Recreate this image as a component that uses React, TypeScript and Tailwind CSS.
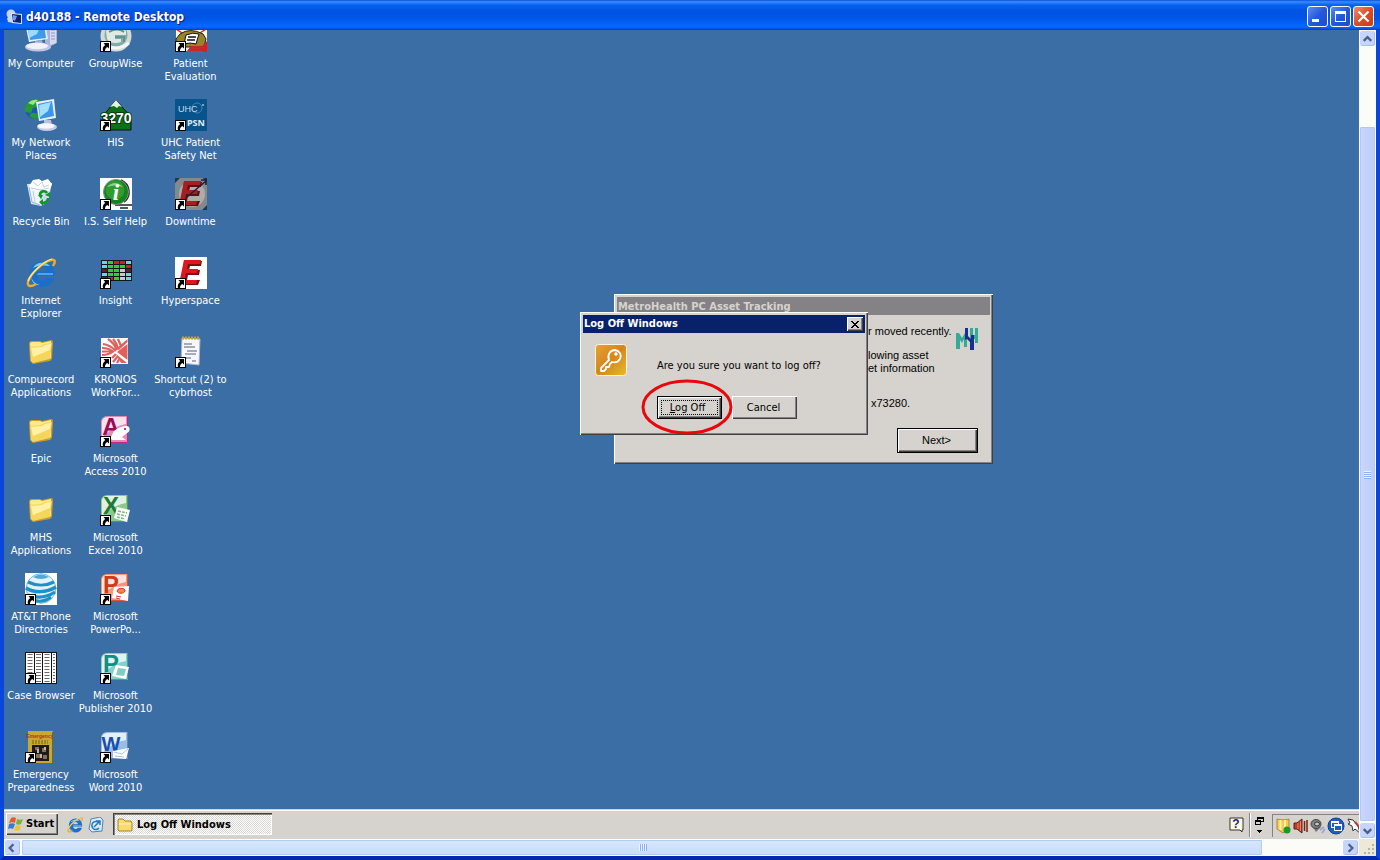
import React from "react";

const tahoma = "font-['DejaVu_Sans_Condensed','Noto_Sans',sans-serif]";
const raised =
  "bg-[#d6d3ce] shadow-[inset_1px_1px_#ffffff,inset_-1px_-1px_#404040,inset_-2px_-2px_#848284]";

function Svg({ children, label }: { children: React.ReactNode; label?: string }) {
  return (
    <svg viewBox="0 0 32 32" className="block size-8 shrink-0" aria-hidden={!label} aria-label={label}>
      {children}
    </svg>
  );
}

function Shortcut() {
  return (
    <g>
      <rect x="0" y="21" width="11" height="11" fill="#000" />
      <rect x="1" y="22" width="9" height="9" fill="#fff" />
      <path d="M3.500 23H9v5.500L7.300 27C5.600 28 5 29 5 31H3c-.8-2.500 0-4.500 2.200-6z" fill="#000" />
    </g>
  );
}

function MyComputerIcon() {
  return (
    <Svg>
      <path d="M20 6l8-4 4 2v19l-6 3-6-3z" fill="#aab3d8" />
      <path d="M25 5l6 1v17l-6 2z" fill="#d5daf0" />
      <path d="M26 10h4M26 13h4M26 16h4M26 19h4" stroke="#8f9ac6" />
      <path d="M0 3l20-2 3 18-19 3z" fill="#e6effc" />
      <path d="M2 5l17-2 2 15-16 2z" fill="#3f9ae8" />
      <path d="M3 6l13-2-4 10-8 4z" fill="#9bdcfd" />
      <path d="M10 21l7-1 1 4-8 1z" fill="#a3acd0" />
      <ellipse cx="13" cy="27" rx="13" ry="4.500" fill="#c0c4de" />
      <ellipse cx="12" cy="26" rx="11" ry="3.200" fill="#eff1fb" />
    </Svg>
  );
}

function NetworkIcon() {
  return (
    <Svg>
      <circle cx="10" cy="10" r="10" fill="#1d55b8" />
      <path d="M2 4c4-5 11-5 15-2l-5 6-4 1-2 5-6-1c-1-4 0-6 2-9zM6 14l6 0 2 5-5 1-5-3z" fill="#259a37" />
      <path d="M3 4c3-3 7-4 10-3l-5 5z" fill="#9fe08c" />
      <path d="M11 3l18-3 2 19-17 3z" fill="#e8effc" />
      <path d="M13 5l14-3 2 15-14 3z" fill="#3997ea" />
      <path d="M14 6l12-3-3 9-8 6z" fill="#a2dffe" />
      <path d="M19 21h7l1 6-8 1z" fill="#b8bfdd" />
      <ellipse cx="22" cy="28" rx="10" ry="4" fill="#c6cae3" />
      <ellipse cx="21" cy="27" rx="8.500" ry="2.700" fill="#f4f5fd" />
    </Svg>
  );
}

function RecycleIcon() {
  return (
    <Svg>
      <path d="M2 6l25-1-4 19-7 4-10-2z" fill="#cfe0f2" />
      <path d="M3 8l13 3v16l-9-2z" fill="#eef5fc" />
      <path d="M4 8l4-6 6-1 3 2 6-2 4 5-3 7-7-1-6 2z" fill="#fff" />
      <path d="M8 4l5 4 4-4 2 5 5-2M6 10l9 2 9-2" stroke="#c0d0e6" fill="none" />
      <path d="M16 12v14M21 12l-2 13M8 13l2 12" stroke="#bdd4ea" />
      <path d="M4 9l3 15 8 3" stroke="#93b7dc" fill="none" />
      <g fill="none" stroke="#149424" strokeWidth="2.600">
        <path d="M15 17c0-4 5-5 7-2M23 20c0 4-3 5-6 5" />
      </g>
      <path d="M20 17l5-3v5zM18 21v7l-4-4zM13 17h5l-2 4z" fill="#149424" />
    </Svg>
  );
}

function IEShape() {
  return (
    <>
      <path
        d="M17 4C9.500 4 4.500 10 4.500 17S9.500 30 17 30c6 0 10.500-3.500 12-9h-8c-.8 1.700-2 2.500-4 2.500-2.600 0-4.200-1.600-4.500-4.500h17C30 10 25 4 17 4zm0 6.500c2.500 0 4.200 1.400 4.500 4h-9c.4-2.600 2-4 4.500-4z"
        fill="#1a6fc9"
      />
      <path d="M8 11c3-6 12-7 17-2-5-1-12-1-17 2zM6 18c0 5 4 9 9 10-5 1-9-3-9-10z" fill="#7ecbf8" />
      <path d="M13 16h15v2H12z" fill="#4ea6e8" />
      <path d="M28 9c3-5 2-7-2-6C18 5 5 17 3 25c-1 5 3 5 8 2" fill="none" stroke="#eaae30" strokeWidth="2.400" />
      <path d="M27 2C19 4 6 16 3 24" fill="none" stroke="#ffeb90" strokeWidth="1.200" />
    </>
  );
}

function FolderIcon() {
  return (
    <Svg>
      <path d="M4 8q0-3 3-3h8l2 1 9-2q2 0 2 2l-1 17-2 2-17 3-3-3z" fill="#c99a2c" />
      <path d="M5 8q0-2 2-2h8l2 1 9-2v17L8 25z" fill="#ffeb8c" />
      <path d="M5 11l11-1 3-2 8-1-2 16-17 4-2-2z" fill="#f5d65c" />
      <path d="M6 12l11-1 3-2 6-1-1 6-17 7z" fill="#fff2a8" />
    </Svg>
  );
}

function GlobeIcon() {
  return (
    <Svg>
      <rect width="32" height="32" fill="#fff" />
      <circle cx="16" cy="15.500" r="14.800" fill="#e3f1f9" stroke="#7db6d6" />
      <path d="M8 4q8-5 16 0-8 4-16 0z" fill="#4fa9d6" />
      <g fill="none" stroke="#1f8fc8">
        <path d="M3 9c8 4 18 4 26 0" strokeWidth="3.200" />
        <path d="M1 15c8 5 20 5 30-1" strokeWidth="3.500" />
        <path d="M3 22c8 3 18 3 27-3" strokeWidth="3.200" />
        <path d="M8 27c6 2 13 1 18-3" strokeWidth="3" />
      </g>
      <Shortcut />
    </Svg>
  );
}

function CaseIcon() {
  return (
    <Svg>
      <rect width="32" height="32" fill="#111" />
      <path d="M1 1h8v30H1zM10 1h7v30h-7zM18 1h8v30h-8zM27 1h4v30h-4z" fill="#fff" />
      <g stroke="#6b6b6b">
        <path d="M5 2v28M13.500 2v28M22 2v28" strokeWidth="5" strokeDasharray="1 2" />
        <path d="M29 2v28" strokeWidth="2" strokeDasharray="1 2" />
      </g>
      <Shortcut />
    </Svg>
  );
}

function EmergencyIcon() {
  return (
    <Svg>
      <rect x="3" y="0" width="25" height="32" fill="#c9a830" />
      <path d="M27.500 1v31" stroke="#786720" />
      <text x="15" y="7" textAnchor="middle" fontSize="5" fontWeight="700" fill="#a83815" className="font-['Liberation_Sans',sans-serif]">
        Emergency
      </text>
      <path d="M7 10h16M7 12h16" stroke="#6a611f" strokeDasharray="2 1" />
      <rect x="7" y="14" width="17" height="16" fill="#1c1a1a" />
      <path d="M10 16h4v3h-4zM17 17h4v4h-4zM11 23h4v4h-4zM18 24h4v4h-4z" fill="#81715c" />
      <path d="M12 18h2v4h-2zM19 16h2v3h-2zM15 23h2v4h-2z" fill="#c6b79c" />
      <Shortcut />
    </Svg>
  );
}

function GroupWiseIcon() {
  return (
    <Svg>
      <circle cx="16" cy="16" r="15.500" fill="#d3dbd9" />
      <circle cx="16" cy="15" r="11.500" fill="#86aaa5" />
      <path d="M6 11c6-5 14-4 20 0v4H15v4h6v3c-6 2-12 1-14-3z" fill="#dfeae4" />
      <path d="M9 12c5-3 11-3 15 0M15 17h9v5" stroke="#5f968d" strokeWidth="2" fill="none" />
      <path d="M3 23q12 10 26 0" stroke="#f4f6f5" strokeWidth="3" fill="none" />
      <Shortcut />
    </Svg>
  );
}

function HisIcon() {
  return (
    <Svg>
      <path d="M16 1l15 17v13H3V17z" fill="#0b7018" stroke="#111" />
      <path d="M16 1l6 7-3-1-2 2-3-2-4 1z" fill="#e2f4df" />
      <text x="16" y="24" textAnchor="middle" fontSize="14" fontWeight="700" fill="#fff" stroke="#083c0d" strokeWidth="2" paintOrder="stroke" className="font-['Liberation_Sans_Narrow','Liberation_Sans',sans-serif]">
        3270
      </text>
      <Shortcut />
    </Svg>
  );
}

function InfoIcon() {
  return (
    <Svg>
      <rect width="32" height="32" fill="#fff" />
      <path d="M21 2c9 4 11 16 3 22M15 27h17M20 30h8" fill="none" stroke="#222" strokeWidth="1.600" />
      <circle cx="16" cy="14" r="12.500" fill="#148320" stroke="#8a8a8a" />
      <circle cx="15" cy="12" r="9.500" fill="#2f9c2f" />
      <path d="M7 9q8-8 16 0-8-3-16 0z" fill="#8fd08b" />
      <text x="16" y="22" textAnchor="middle" fontSize="23" fontWeight="700" fontStyle="italic" fill="#fff" className="font-['Liberation_Serif',serif]">
        i
      </text>
      <Shortcut />
    </Svg>
  );
}

function InsightIcon() {
  const rows = ["cgrrc", "cgggr", "dggwd", "cggwc", "drgwc"];
  const colors: Record<string, string> = { c: "#66d8df", g: "#25d52e", r: "#cf1e25", d: "#711720", w: "#c8c8cf" };
  return (
    <Svg>
      <rect x="1" y="3" width="31" height="21" fill="#10151b" />
      {rows.flatMap((row, y) =>
        row.split("").map((c, x) => <rect key={`${x}-${y}`} x={2 + x * 6} y={4 + y * 4} width="5" height="3" fill={colors[c]} />),
      )}
      <Shortcut />
    </Svg>
  );
}

function KronosIcon() {
  return (
    <Svg>
      <rect x="1" y="2" width="27" height="26" fill="#fff" />
      <g fill="none" stroke="#e0605c" strokeWidth="2.200">
        <path d="M2 12q7 0 12 4M2 15.500h11M2 19q7 0 12-4M3 8q7 1 13 7M8 3q6 4 9 11M13 3q4 5 5 9M18 3l3 7" />
        <path d="M12 22l4-4M13 26l5-6M17 27l3-5" />
      </g>
      <path d="M27.500 3v3L19 14l-3-1zM17 16l10.500-8v16z" fill="#e0605c" />
      <path d="M16 18l11 9h-6z" fill="#e0605c" />
      <Shortcut />
    </Svg>
  );
}

type OfficeKind = "access" | "excel" | "powerpoint" | "publisher" | "word";
const officeData: Record<OfficeKind, [string, string, string, string]> = {
  access: ["A", "#9d0a57", "#dd8db8", "#c0287a"],
  excel: ["X", "#217a33", "#8cc98c", "#4b9c55"],
  powerpoint: ["P", "#d03a18", "#f0987c", "#d9543b"],
  publisher: ["P", "#0f9085", "#86d0c8", "#36a99f"],
  word: ["W", "#1450b0", "#9cbce6", "#5688cc"],
};

function OfficeIcon({ kind }: { kind: OfficeKind }) {
  const [letter, dark, light, edge] = officeData[kind];
  return (
    <Svg>
      <path d="M1 6Q2 1 8 1h20v27H1z" fill={light} />
      <path d="M27.500 1v26.500H1" fill="none" stroke={edge} />
      <path d="M2 6q1-4 6-4h18v7Q14 11 2 22z" fill="#fff" opacity=".75" />
      <text
        x="11"
        y={kind === "word" ? 20 : 20}
        textAnchor="middle"
        fontSize={kind === "word" ? 20 : 24}
        fontWeight="700"
        fill={dark}
        className="font-['Liberation_Sans_Narrow','Liberation_Sans',sans-serif]"
      >
        {letter}
      </text>
      {kind === "access" && <path d="M10 24l4-8q6-5 13-5c4 1 3 6 0 7l-5 4 4 3H13z" fill="#fff" />}
      {kind === "access" && <circle cx="25" cy="14" r="1" fill={dark} />}
      {kind === "excel" && <path d="M17 13l13 3-3 12-13-4z" fill="#fff" />}
      {kind === "excel" && <path d="M18 17l9 2M17 20l9 2M17 23l8 2" stroke="#75b77c" strokeWidth="1.500" strokeDasharray="3 1" />}
      {kind === "powerpoint" && <path d="M14 14l15-1-1 15-16-3z" fill="#fff" />}
      {kind === "powerpoint" && <path d="M17 18c1-4 9-3 8 0-1 3-7 3-8 0M16 23l5 1M16 25l4 1" stroke={dark} fill="#f08060" />}
      {kind === "publisher" && <path d="M16 13l13 2-3 12-14-3z" fill="#fff" />}
      {kind === "publisher" && <path d="M18 16l8 1-2 7-8-1z" fill="#8ac9c3" />}
      {kind === "word" && <path d="M13 20l16-3-3 11-13-1z" fill="#fff" />}
      {kind === "word" && <path d="M14 21l8 2 6-5M15 25l9 1" stroke="#a9c0dd" fill="none" />}
      <Shortcut />
    </Svg>
  );
}

function PatientIcon() {
  return (
    <Svg>
      <rect x="1" y="0" width="31" height="31" fill="#faf7ef" />
      <path d="M1 9l6 4M31 9l-6 4" stroke="#d8282a" strokeWidth="1.500" />
      <path d="M5 14q10-7 23 0l3 5-2 8H1v-8z" fill="#97832c" stroke="#211f11" />
      <path d="M11 15q7-3 13-1l-3 10q-6-2-12 0z" fill="#fff" stroke="#111" />
      <path d="M13 17h8M12 20h8" stroke="#111" strokeWidth="1.500" />
      <path d="M12 31l4-5h9l7 5z" fill="#c22a2c" />
      <path d="M27 26l5-5v11h-4z" fill="#e71825" />
      <Shortcut />
    </Svg>
  );
}

function UhcIcon() {
  return (
    <Svg>
      <rect width="32" height="32" fill="#07548d" />
      <circle cx="22" cy="9" r="5" fill="none" stroke="#4382ad" />
      <text x="3" y="13" fontSize="9" fill="#c7dae6" className="font-['Liberation_Sans',sans-serif]">UHC</text>
      <circle cx="28" cy="6" r="1" fill="#9dc0d6" />
      <text x="12" y="27" fontSize="9" fontWeight="700" fill="#e1edf4" className="font-['Noto_Sans',sans-serif]">PSN</text>
      <Shortcut />
    </Svg>
  );
}

function EpicIcon({ down }: { down?: boolean }) {
  return (
    <Svg>
      <rect width="32" height="32" fill={down ? "#85898b" : "#fff"} />
      {down && <path d="M0 0h5L0 5zM28 0h4v5zM0 28v4h4zM32 27v5h-5z" fill="#123e50" />}
      {down && <circle cx="17" cy="16" r="13" fill="#b0aba8" />}
      <path d="M9 4h18l-1 5H15l-1 4h11l-1 5H13l-1 5h13l-2 5H5z" fill={down ? "#5b1114" : "#7c0e14"} />
      <path d="M9 3h17l-1 4H13l-1 5h11l-1 4H11l-1 7h12l-1 4H4z" fill={down ? "#a61e22" : "#dc1720"} />
      {down && <path d="M12 19L31 3M26 2h5v5" stroke="#14243b" strokeWidth="1.600" fill="none" />}
      <Shortcut />
    </Svg>
  );
}

function NoteIcon() {
  return (
    <Svg>
      <path d="M7 2l18 1-1 26-18-2z" fill="#f7f8ff" stroke="#adb5c7" />
      <path d="M7 2h18" stroke="#c6a32c" strokeWidth="3" strokeDasharray="2 1" />
      <path d="M9 8h8M9 11h11M12 15h10M10 18h11M10 22h6M17 25h4" stroke="#536176" />
      <Shortcut />
    </Svg>
  );
}

type Item = { lines: string[]; icon: React.ReactNode };
const columns: Item[][] = [
  [
    { lines: ["My Computer"], icon: <MyComputerIcon /> },
    { lines: ["My Network", "Places"], icon: <NetworkIcon /> },
    { lines: ["Recycle Bin"], icon: <RecycleIcon /> },
    { lines: ["Internet", "Explorer"], icon: <Svg><IEShape /></Svg> },
    { lines: ["Compurecord", "Applications"], icon: <FolderIcon /> },
    { lines: ["Epic"], icon: <FolderIcon /> },
    { lines: ["MHS", "Applications"], icon: <FolderIcon /> },
    { lines: ["AT&T Phone", "Directories"], icon: <GlobeIcon /> },
    { lines: ["Case Browser"], icon: <CaseIcon /> },
    { lines: ["Emergency", "Preparedness"], icon: <EmergencyIcon /> },
  ],
  [
    { lines: ["GroupWise"], icon: <GroupWiseIcon /> },
    { lines: ["HIS"], icon: <HisIcon /> },
    { lines: ["I.S. Self Help"], icon: <InfoIcon /> },
    { lines: ["Insight"], icon: <InsightIcon /> },
    { lines: ["KRONOS", "WorkFor..."], icon: <KronosIcon /> },
    { lines: ["Microsoft", "Access 2010"], icon: <OfficeIcon kind="access" /> },
    { lines: ["Microsoft", "Excel 2010"], icon: <OfficeIcon kind="excel" /> },
    { lines: ["Microsoft", "PowerPo..."], icon: <OfficeIcon kind="powerpoint" /> },
    { lines: ["Microsoft", "Publisher 2010"], icon: <OfficeIcon kind="publisher" /> },
    { lines: ["Microsoft", "Word 2010"], icon: <OfficeIcon kind="word" /> },
  ],
  [
    { lines: ["Patient", "Evaluation"], icon: <PatientIcon /> },
    { lines: ["UHC Patient", "Safety Net"], icon: <UhcIcon /> },
    { lines: ["Downtime"], icon: <EpicIcon down /> },
    { lines: ["Hyperspace"], icon: <EpicIcon /> },
    { lines: ["Shortcut (2) to", "cybrhost"], icon: <NoteIcon /> },
  ],
];

function DesktopIcon({ lines, icon }: Item) {
  return (
    <button type="button" className="flex h-[79px] flex-col items-center gap-[5px] text-[11px] leading-[13px] text-white">
      {icon}
      <span className="flex flex-col items-center whitespace-nowrap">
        {lines.map((line) => (
          <span key={line}>{line}</span>
        ))}
      </span>
    </button>
  );
}

function TitleBar() {
  const control =
    "flex size-[21px] items-center justify-center rounded-[3px] border border-white bg-linear-to-br from-[#5c8cf5] via-[#2458dc] to-[#1d4bd0]";
  return (
    <header className="flex h-[30px] shrink-0 items-center bg-[linear-gradient(to_bottom,#0c50d8_0%,#3a8cff_6%,#0863f0_16%,#0054e3_35%,#0055e8_60%,#0668ff_88%,#0557e8_95%,#0138b4_100%)] pt-[3px] pr-1.5 pl-1.5">
      <svg viewBox="0 0 16 16" className="size-4" aria-hidden="true">
        <circle cx="5" cy="5" r="4.500" fill="#c9d4ec" />
        <path d="M1 9l5-2 2 7-6-1z" fill="#cdd6e8" />
        <path d="M5 4l11 1v10l-10-1z" fill="#dde7fb" />
        <path d="M6 5l9 1v8l-8-1z" fill="#101f70" />
        <path d="M7 6l4 1-2 5-2-1z" fill="#6d9cf0" />
      </svg>
      <h1 className="ml-1 flex-1 font-['DejaVu_Sans_Condensed','Noto_Sans',sans-serif] text-[12px] leading-4 font-bold text-white text-shadow-[1px_1px_1px_#0a1883]">
        d40188 - Remote Desktop
      </h1>
      <div className="flex gap-0.5">
        <button type="button" aria-label="Minimize" className={control}>
          <svg viewBox="0 0 19 19" className="size-[19px]"><path d="M4 12h7v3H4z" fill="#fff" /></svg>
        </button>
        <button type="button" aria-label="Maximize" className={control}>
          <svg viewBox="0 0 19 19" className="size-[19px]"><path d="M4 4h11v11H4zM5 7v7h9V7z" fill="#fff" fillRule="evenodd" /></svg>
        </button>
        <button type="button" aria-label="Close" className="flex size-[21px] items-center justify-center rounded-[3px] border border-white bg-linear-to-br from-[#ee8a6c] via-[#dd4c25] to-[#c93c17]">
          <svg viewBox="0 0 19 19" className="size-[19px]"><path d="M4.500 4.500l10 10M14.500 4.500l-10 10" stroke="#fff" strokeWidth="2.200" /></svg>
        </button>
      </div>
    </header>
  );
}

function ScrollButton({ dir }: { dir: "up" | "down" | "left" | "right" }) {
  const paths = { up: "M4 10l4-4 4 4", down: "M4 6l4 4 4-4", left: "M9 4L5 8l4 4", right: "M6 4l4 4-4 4" };
  return (
    <button type="button" aria-label={`Scroll ${dir}`} className="flex size-[17px] shrink-0 items-center justify-center rounded-[3px] border border-white bg-[#c5d5fc] shadow-[inset_-1px_-1px_#a9bff0]">
      <svg viewBox="0 0 16 16" className="size-4"><path d={paths[dir]} fill="none" stroke="#4d6185" strokeWidth="2.500" /></svg>
    </button>
  );
}

function AssetDialog() {
  return (
    <section aria-label="MetroHealth PC Asset Tracking" className={`absolute top-[264px] left-[610px] flex h-[170px] w-[379px] flex-col p-[3px] ${raised}`}>
      <h2 className="h-[18px] bg-[#848284] px-px text-[11px] leading-[19px] font-bold whitespace-nowrap text-[#d6d3ce]">MetroHealth PC Asset Tracking</h2>
      <div className="flex flex-1 flex-col pt-[10px] pr-3 pl-[251px] font-['Liberation_Sans',sans-serif] text-[11px] leading-[13px] text-black">
        <div className="flex items-start justify-between">
          <div className="whitespace-nowrap">
            <p>r moved recently.</p>
            <p className="mt-[11px]">lowing asset</p>
            <p>et information</p>
            <p className="mt-[22px] pl-[3px]">x73280.</p>
          </div>
          <svg viewBox="0 0 22 22" className="mt-[3px] h-[22px] w-[22px] shrink-0" aria-label="MetroHealth">
            <path d="M0 21V5h3l3 5 3-5h2v14H8v-8l-2 4-2-3v9z" fill="#35aa94" />
            <path d="M14 0h3v7h2V0h3v15h-3v-4h-5z" fill="#35aa94" />
            <path d="M9 0h3v8l3 3V7h3v15h-4v-8l-3-3-2 1z" fill="#1b2f92" />
          </svg>
        </div>
        <button type="button" className="mt-[18px] h-[25px] w-[81px] self-end border border-black bg-[#d6d3ce] pr-0.5 text-[11px] shadow-[inset_1px_1px_#fff,inset_-1px_-1px_#404040,inset_-2px_-2px_#848284]">
          Next&gt;
        </button>
      </div>
    </section>
  );
}

function LogOffDialog() {
  return (
    <section role="dialog" aria-label="Log Off Windows" className={`absolute top-[282px] left-[576px] flex h-[123px] w-[288px] flex-col p-[3px] ${raised}`}>
      <div className="flex h-[18px] items-center justify-between bg-[#08216b] pr-0.5 pl-px">
        <h2 className="text-[11px] leading-[18px] font-bold text-white">Log Off Windows</h2>
        <button type="button" aria-label="Close" className={`flex h-[14px] w-4 items-center justify-center ${raised}`}>
          <svg viewBox="0 0 8 7" className="h-[7px] w-2" shapeRendering="crispEdges"><path d="M0 0h2v1h1v1h2V1h1V0h2v1H7v1H6v1H5v1h1v1h1v1h1v1H6V6H5V5H3v1H2v1H0V6h1V5h1V4h1V3H2V2H1V1H0z" fill="#000" /></svg>
        </button>
      </div>
      <div className="flex gap-[29px] pt-[11px] pl-3 text-[11px] leading-[13px] text-black">
        <svg viewBox="0 0 32 32" className="size-8 shrink-0" aria-hidden="true">
          <defs>
            <linearGradient id="keyFill" x2="1" y2="1"><stop stopColor="#e8a038" /><stop offset=".5" stopColor="#d4861c" /><stop offset="1" stopColor="#e9bb32" /></linearGradient>
          </defs>
          <rect x=".5" y=".5" width="31" height="31" rx="3" fill="url(#keyFill)" stroke="#fff4dc" />
          <path d="M14 16c-2-5 1-10 6-10 5 1 7 5 5 9-2 3-5 4-8 3l-2 2-1 3h-3v2l-2 2H6v-3z" fill="none" stroke="#fff" strokeWidth="1.800" strokeLinejoin="round" />
          <circle cx="21" cy="10" r="1.800" fill="#fff" />
        </svg>
        <div className="pt-[15px] pl-px">
          <p className="whitespace-nowrap">Are you sure you want to log off?</p>
          <div className="mt-6 flex gap-[10px]">
            <div className="relative">
              <button type="button" className="h-[23px] w-[65px] border border-black bg-[#d6d3ce] p-[3px] shadow-[inset_1px_1px_#fff,inset_-1px_-1px_#404040,inset_-2px_-2px_#848284]">
                <span className="flex h-full items-center justify-center border border-dotted border-black pr-1">
                  <span><u>L</u>og Off</span>
                </span>
              </button>
              <svg viewBox="0 0 92 56" className="pointer-events-none absolute top-[-17px] left-[-16px] h-14 w-[92px] max-w-none" aria-hidden="true">
                <ellipse cx="46" cy="28" rx="44" ry="26" fill="none" stroke="#e8080c" strokeWidth="3" />
              </svg>
            </div>
            <button type="button" className={`h-[23px] w-[65px] pr-0.5 ${raised}`}>Cancel</button>
          </div>
        </div>
      </div>
    </section>
  );
}

function Taskbar() {
  return (
    <footer className="flex h-[30px] shrink-0 items-start border-t border-[#d6d3ce] bg-[#d6d3ce] pt-[3px] pl-0.5 text-[11px] text-black shadow-[inset_0_1px_#fff]">
      <button type="button" className={`flex h-[22px] w-[52px] items-center gap-0.5 pl-0.5 font-bold ${raised}`}>
        <svg viewBox="0 0 16 16" className="size-4 shrink-0" aria-hidden="true">
          <path d="M3 2c2-1 3-1 5 0L7 7C5 6 4 6 1 7z" fill="#e35d2b" />
          <path d="M9 3c2 1 4 1 6 0l-2 5c-2 1-3 1-5 0z" fill="#71b63d" />
          <path d="M1 8c2-1 4-1 6 0l-2 5c-2-1-3-1-5 0z" fill="#367bd2" />
          <path d="M8 9c2 1 3 1 5 0l-1 5c-2 1-4 1-6 0z" fill="#efc432" />
        </svg>
        Start
      </button>
      <button type="button" aria-label="Internet Explorer" className="mt-1 ml-[9px]">
        <svg viewBox="1 1 30 30" className="size-4"><IEShape /></svg>
      </button>
      <button type="button" aria-label="Outlook Express" className="mt-1 ml-[5px]">
        <svg viewBox="0 0 16 16" className="size-4">
          <path d="M3 2l9-2 3 3-1 11-10 1-3-3z" fill="#d9ebfa" stroke="#4b83b7" />
          <path d="M11 6a4 4 0 1 0 0 5M6 10l6-6M8 4h4v4" fill="none" stroke="#2377be" strokeWidth="1.500" />
        </svg>
      </button>
      <button type="button" className="ml-[9px] flex h-[22px] w-[159px] items-center gap-1 bg-[#eae8e5] bg-[repeating-conic-gradient(#ffffff_0_25%,#d9d7d3_0_50%)] bg-[size:2px_2px] pt-0.5 pl-1 font-bold shadow-[inset_1px_1px_#404040,inset_2px_2px_#848284,inset_-1px_-1px_#fff]">
        <svg viewBox="0 0 16 16" className="size-4" aria-hidden="true">
          <path d="M1 3l1-1h4l2 2h6l1 2v7l-1 1H2l-1-1z" fill="#f7da70" stroke="#a88424" />
          <path d="M2 7h12" stroke="#fff6b4" />
        </svg>
        Log Off Windows
      </button>
      <div className="ml-auto flex h-6 items-center">
        <svg viewBox="0 0 15 16" className="h-4 w-[15px]" aria-label="Help">
          <path d="M1 1h13v12h-1v2l-2-2H1z" fill="#fffce1" stroke="#333" />
          <text x="7" y="11" textAnchor="middle" fontSize="12" fontWeight="700" fill="#1b2679" className="font-['Liberation_Sans',sans-serif]">?</text>
        </svg>
        <span className="ml-[5px] h-6 w-0.5 border-r border-l border-r-white border-l-[#848284]" />
        <svg viewBox="0 0 9 17" className="ml-1 h-[17px] w-[9px]" aria-hidden="true" shapeRendering="crispEdges">
          <path d="M2 0h7v5H6v3H0V3h2zM3 2v1h3v1h2V2zM1 5v2h4V5zM2 13h5v1H6v1H5v1H4v-1H3v-1H2z" fill="#000" fillRule="evenodd" />
        </svg>
        <div className="ml-2 flex h-[23px] w-[87px] items-center gap-px overflow-hidden border-t border-l border-[#848284] pl-[3px]">
          <svg viewBox="0 0 16 16" className="size-4 shrink-0"><path d="M1 1c3 1 10 1 12 0v10l-6 4-6-4z" fill="#f1cb54" stroke="#ad8a30" /><path d="M4.500 2v10M9 2v11" stroke="#fff2a3" strokeWidth="2" /><circle cx="11" cy="12" r="3.500" fill="#1b9a29" /></svg>
          <svg viewBox="0 0 16 16" className="size-4 shrink-0"><path d="M1 5h3l5-4v14l-5-4H1z" fill="#bb4027" stroke="#582016" /><path d="M5 5v6M7.500 3v10" stroke="#ee8462" /><path d="M11.500 3v10M14 2v12" stroke="#732414" strokeWidth="1.500" /></svg>
          <svg viewBox="0 0 16 16" className="size-4 shrink-0"><path d="M2 8l4 6 5-5z" fill="#777" /><ellipse cx="6" cy="6" rx="5" ry="4.500" fill="#828282" stroke="#444" /><ellipse cx="7" cy="6" rx="2.500" ry="2" fill="#c7c7c7" stroke="#333" /><path d="M10 12l4-3M12 15l3-4" stroke="#a0a7d0" strokeWidth="2" /></svg>
          <svg viewBox="0 0 18 18" className="size-[18px] shrink-0"><circle cx="9" cy="9" r="8" fill="#1d5fc0" stroke="#123f86" /><path d="M4 4h8v7H4z" fill="#fff" /><path d="M5 6h6v4H5z" fill="#1d5fc0" /><path d="M7 7h8v7H7z" fill="#fff" /><path d="M8 9h6v4H8z" fill="#1d5fc0" /></svg>
          <svg viewBox="0 0 16 16" className="size-4 shrink-0"><path d="M2 1l5 1 5 6 2 7-5-4-2 2-1-5-4-2 2-1z" fill="#fff" stroke="#333" /><path d="M9 4l5 6" stroke="#b6362c" strokeWidth="2" /></svg>
        </div>
      </div>
    </footer>
  );
}

export default function App() {
  return (
    <main className={`flex h-screen w-full flex-col overflow-hidden bg-[#0842d0] ${tahoma}`}>
      <TitleBar />
      <div className="flex min-h-0 flex-1 flex-col border-x-4 border-b-4 border-x-[#0846dc] border-b-[#0529ad]">
        <div className="flex min-h-0 flex-1">
          <div className="flex min-w-0 flex-1 flex-col">
            <div className="relative min-h-0 flex-1 overflow-hidden bg-[#3a6ea5]">
              <div className="-mt-[10px] grid grid-cols-[74px_75px_75px] items-start">
                {columns.map((items, index) => (
                  <div key={index} className="flex flex-col">
                    {items.map((item) => (
                      <DesktopIcon key={item.lines.join(" ")} {...item} />
                    ))}
                  </div>
                ))}
              </div>
              <AssetDialog />
              <LogOffDialog />
            </div>
            <Taskbar />
          </div>
          <div className="flex w-[17px] shrink-0 flex-col bg-[#fbfbf8]">
            <ScrollButton dir="up" />
            <div className="flex min-h-0 flex-1 flex-col pt-[79px]">
              <div className="flex flex-1 flex-col items-center justify-center gap-px rounded-[2px] border border-white bg-linear-to-r from-[#c9d7fc] to-[#bdccfa] shadow-[inset_0_0_0_1px_#b4c8f6]">
                {[0, 1, 2, 3].map((n) => (
                  <span key={n} className="h-px w-[7px] bg-[#eef4fe] shadow-[0_1px_#8cb0f8]" />
                ))}
              </div>
            </div>
            <ScrollButton dir="down" />
          </div>
        </div>
        <div className="flex h-[17px] shrink-0 bg-[#fbfbf8]">
          <ScrollButton dir="left" />
          <div className="flex min-w-0 flex-1 pr-[79px]">
            <div className="flex flex-1 items-center justify-center gap-px rounded-[2px] border border-white bg-linear-to-b from-[#d8e7fd] to-[#c6dcfb] shadow-[inset_0_0_0_1px_#b0cdf4]">
              {[0, 1, 2, 3].map((n) => (
                <span key={n} className="h-[7px] w-px bg-[#eef4fe] shadow-[1px_0_#8cb0f8]" />
              ))}
            </div>
          </div>
          <ScrollButton dir="right" />
          <svg viewBox="0 0 17 17" className="size-[17px] shrink-0 bg-[#ece9d8]" aria-hidden="true">
            <path d="M13 5h2v2h-2zM9 9h2v2H9zM13 9h2v2h-2zM5 13h2v2H5zM9 13h2v2H9zM13 13h2v2h-2z" fill="#b8b4a2" />
          </svg>
        </div>
      </div>
    </main>
  );
}
